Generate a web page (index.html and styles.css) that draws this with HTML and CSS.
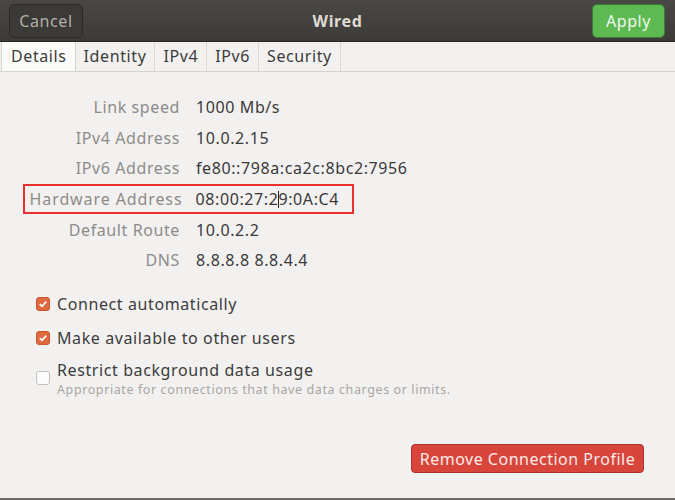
FILE: index.html
```html
<!DOCTYPE html>
<html>
  <head>
    <title>Wired</title>
    <link rel="stylesheet" href="styles.css">
  </head>
  <body>
    <div class="headerbar">
      <button class="btn-cancel">Cancel</button>
      <div class="title">Wired</div>
      <button class="btn-apply">Apply</button>
    </div>
    <div class="tabs">
      <div class="tab active">Details</div>
      <div class="tab">Identity</div>
      <div class="tab">IPv4</div>
      <div class="tab">IPv6</div>
      <div class="tab">Security</div>
    </div>
    <div class="content">
      <div class="info">
        <div class="row"><span class="key">Link speed</span><span class="val">1000 Mb/s</span></div>
        <div class="row"><span class="key">IPv4 Address</span><span class="val">10.0.2.15</span></div>
        <div class="row"><span class="key">IPv6 Address</span><span class="val">fe80::798a:ca2c:8bc2:7956</span></div>
        <div class="row marked"><span class="key">Hardware Address</span><span class="val">08:00:27:2<span class="caret"></span>9:0A:C4</span></div>
        <div class="row"><span class="key">Default Route</span><span class="val">10.0.2.2</span></div>
        <div class="row"><span class="key">DNS</span><span class="val">8.8.8.8 8.8.4.4</span></div>
      </div>
      <div class="checks">
        <div class="check"><span class="box on"><svg width="10" height="10" viewBox="0 0 10 10"><path d="M1.8 5.2 L4 7.3 L8.3 2.6" fill="none" stroke="#fff" stroke-width="1.6"/></svg></span><span class="lbl">Connect automatically</span></div>
        <div class="check"><span class="box on"><svg width="10" height="10" viewBox="0 0 10 10"><path d="M1.8 5.2 L4 7.3 L8.3 2.6" fill="none" stroke="#fff" stroke-width="1.6"/></svg></span><span class="lbl">Make available to other users</span></div>
        <div class="check restrict"><span class="box"></span><div><div class="lbl">Restrict background data usage</div><div class="hint">Appropriate for connections that have data charges or limits.</div></div></div>
      </div>
      <div class="footer">
        <button class="btn-remove">Remove Connection Profile</button>
      </div>
    </div>
  </body>
</html>
```

FILE: styles.css
```css
body {
  margin: 0;
  width: 675px;
  height: 500px;
  background: #f2f1f0;
  font-family: "Noto Sans", "DejaVu Sans", sans-serif;
  font-size: 16px;
  letter-spacing: 0.6px;
  overflow: hidden;
  position: relative;
}
.headerbar {
  height: 42px;
  background: linear-gradient(#4a4844, #3d3b37);
  border-bottom: 1px solid #252420;
  display: flex;
  align-items: center;
  justify-content: space-between;
  padding: 1px 10px 0 9px;
  box-sizing: border-box;
}
.btn-cancel {
  width: 74px;
  height: 34px;
  background: #3c3a36;
  border: 1px solid #2b2a27;
  border-radius: 5px;
  color: #b3afa8;
  font-family: inherit;
  font-size: 16px;
  letter-spacing: 0.6px;
  padding: 0;
}
.title {
  color: #dfdbd2;
  font-weight: bold;
  font-size: 16px;
}
.btn-apply {
  width: 73px;
  height: 34px;
  background: #5dba53;
  border: 1px solid #3b7d34;
  border-radius: 5px;
  color: #f1f7ee;
  font-family: inherit;
  font-size: 16px;
  letter-spacing: 0.6px;
  padding: 0;
}
.tabs {
  display: flex;
  height: 29px;
  border-bottom: 1px solid #d6d3cf;
}
.tab {
  padding: 0 8px;
  color: #3c3c3c;
  line-height: 29px;
  border-right: 1px solid #dcd9d5;
}
.tab.active {
  background: #fbfbfa;
  border: 1px solid #d6d3cf;
  border-bottom: none;
  border-top: none;
  margin-left: 1px;
  padding: 0 8px 0 9px;
}
.content {
  padding-top: 20px;
}
.info {
  display: flex;
  flex-direction: column;
}
.row {
  display: flex;
  align-items: center;
  height: 30.6px;
}
.key {
  width: 196px;
  text-align: right;
  color: #8d8b88;
  padding-right: 16px;
  box-sizing: border-box;
}
.val {
  color: #3a3a3a;
  display: flex;
  align-items: center;
}
.marked {
  margin-left: 23px;
  width: 331px;
  box-sizing: border-box;
  border: 2.5px solid #e8302e;
}
.marked .key {
  width: 170.5px;
  padding-right: 13px;
  letter-spacing: 0.9px;
}
.caret {
  display: inline-block;
  width: 1px;
  height: 17px;
  background: #222;
  margin: 0 -1px 0 0;
}
.checks {
  margin-top: 11px;
  padding-left: 36px;
}
.check {
  display: flex;
  align-items: center;
  color: #3c3c3c;
  height: 34px;
}
.box {
  width: 14px;
  height: 14px;
  border-radius: 3px;
  margin-right: 7px;
  box-sizing: border-box;
  border: 1px solid #c3c0bb;
  background: #fcfcfc;
  display: flex;
  align-items: center;
  justify-content: center;
  flex-shrink: 0;
}
.box.on {
  background: #df6a3f;
  border-color: #c8562d;
}
.check.restrict {
  align-items: flex-start;
  margin-top: 6px;
  height: auto;
}
.check.restrict .lbl {
  line-height: 18px;
}
.check.restrict .box {
  margin-top: 10px;
}
.hint {
  font-size: 12.5px;
  line-height: 13px;
  margin-top: 4px;
  letter-spacing: 0.6px;
  color: #a9a6a2;
}
.footer {
  position: absolute;
  left: 411px;
  top: 444px;
}
.btn-remove {
  width: 233px;
  height: 29px;
  background: #d8453b;
  border: 1px solid #b0302a;
  border-radius: 4px;
  color: #fbeae8;
  font-family: inherit;
  font-size: 16px;
  letter-spacing: 0.5px;
  padding: 0;
}
body::after {
  content: "";
  position: absolute;
  left: 0;
  right: 0;
  bottom: 0;
  height: 2px;
  background: #6b6964;
}
```
